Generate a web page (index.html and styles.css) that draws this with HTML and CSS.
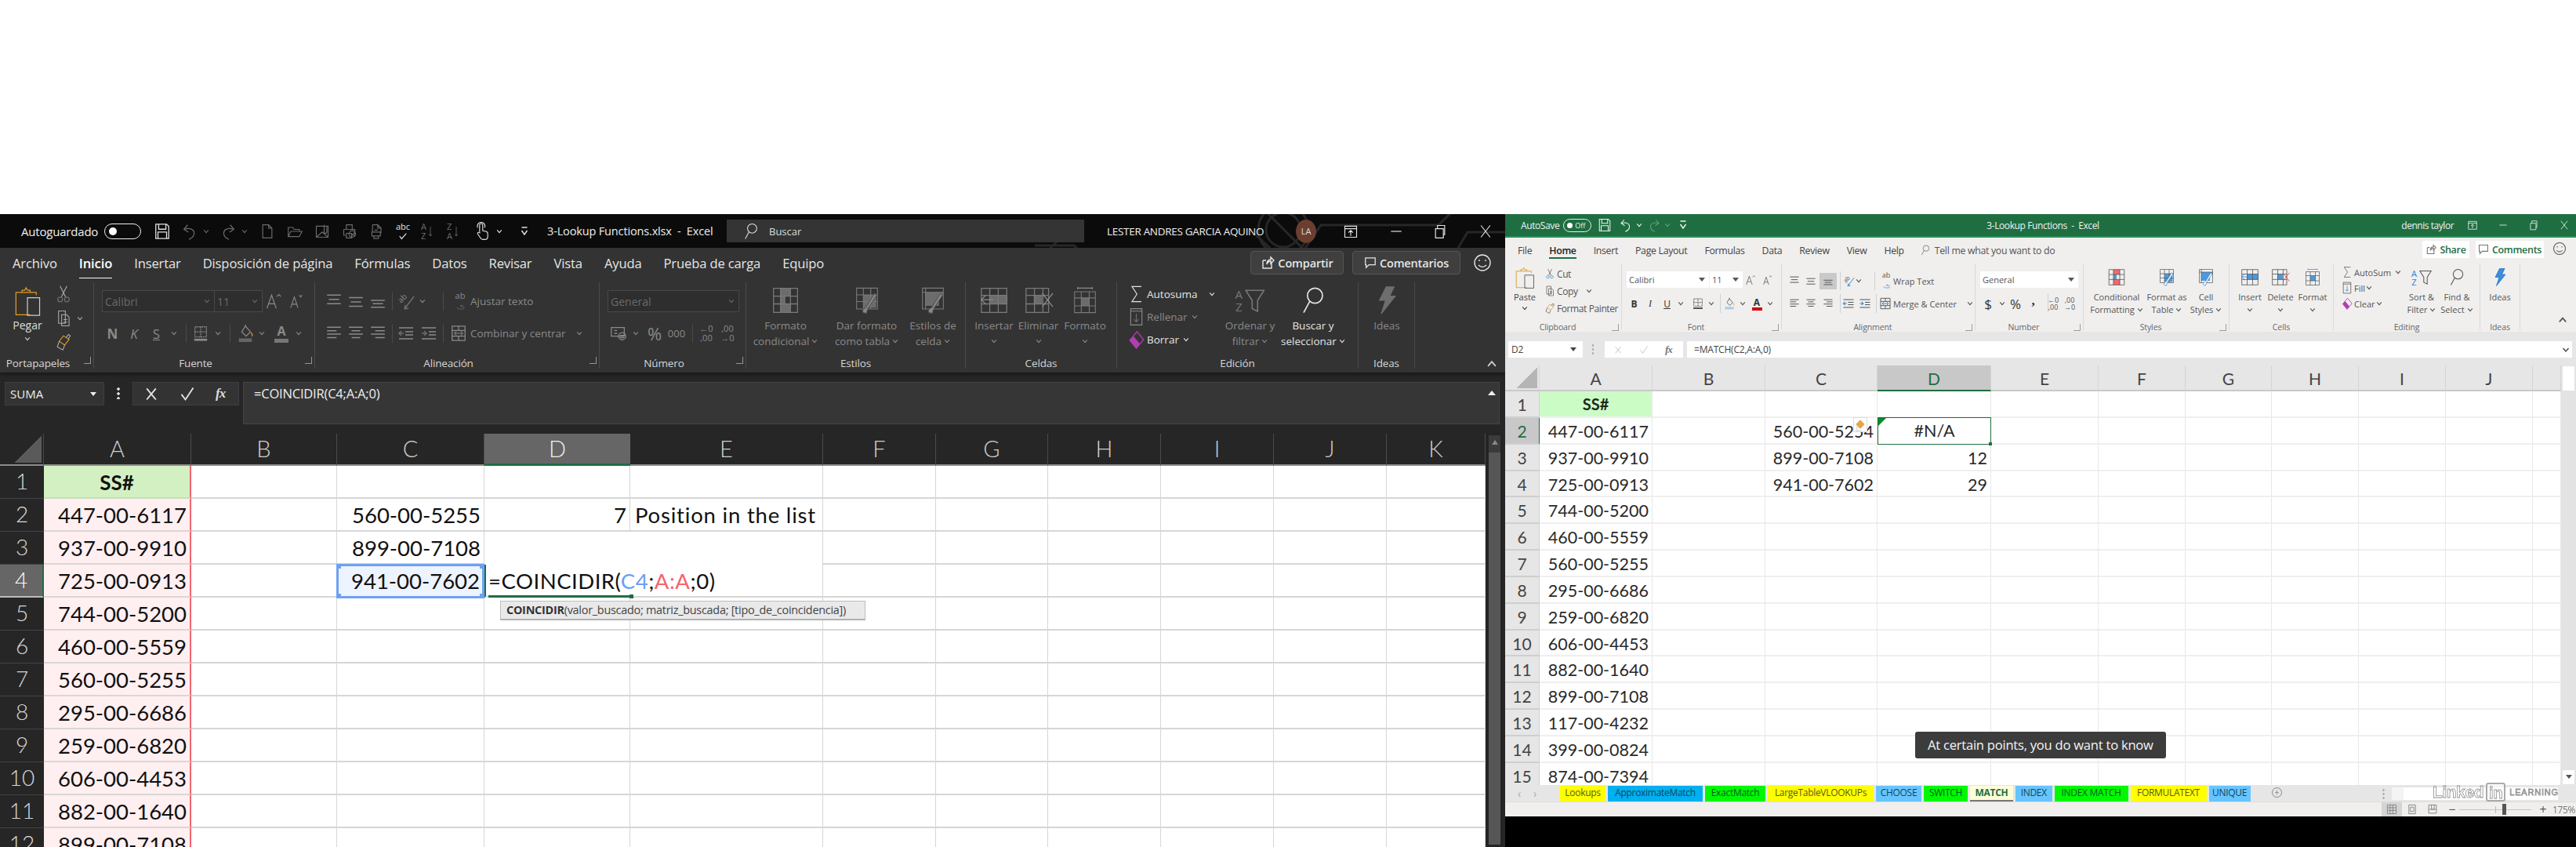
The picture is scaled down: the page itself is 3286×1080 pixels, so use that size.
FILE: index.html
```html
<!DOCTYPE html>
<html lang="es">
<head>
<meta charset="utf-8">
<title>Excel comparison</title>
<link rel="stylesheet" href="styles.css">
</head>
<body>
<svg class="defs" aria-hidden="true">
  <symbol id="save" viewBox="0 0 24 24"><path d="M3 2h15l3 3v17H3zM7 2v7h10V2M6 22v-9h12v9"/></symbol>
  <symbol id="undo" viewBox="0 0 24 24"><path d="M9 3 4 9l6 4M4 9c9-3 15 1 14 7-1 4-4 6-7 7"/></symbol>
  <symbol id="redo" viewBox="0 0 24 24"><path d="M15 3l5 6-6 4M20 9c-9-3-15 1-14 7 1 4 4 6 7 7"/></symbol>
  <symbol id="chev" viewBox="0 0 10 10"><path d="M1.5 3 5 7l3.5-4"/></symbol>
  <symbol id="new" viewBox="0 0 24 24"><path d="M5 2h9l5 5v15H5zM14 2v5h5"/></symbol>
  <symbol id="open" viewBox="0 0 24 24"><path d="M2 20V6h7l2 3h8v3M2 20l4-8h17l-4 8z"/></symbol>
  <symbol id="mail" viewBox="0 0 24 24"><path d="M3 4h18v17H3zM3 21 12 13l9 8M15 2v11a2 2 0 0 0 4 0V5"/></symbol>
  <symbol id="print" viewBox="0 0 24 24"><path d="M7 2h9v7H7zM3 9h17v9h-3M3 9v9h3M7 15h8v7H7z"/><circle cx="16" cy="16" r="5"/><path d="m14 16 2 2 3-4"/></symbol>
  <symbol id="printp" viewBox="0 0 24 24"><path d="M5 2h8l5 5v8M5 2v11M13 2v5h5M4 13h13v6H4zM7 19h7v4H7zM8 10h5"/></symbol>
  <symbol id="check" viewBox="0 0 14 10"><path d="m2 5 3 4 7-8"/></symbol>
  <symbol id="arrowd" viewBox="0 0 10 24"><path d="M5 2v20M2 18l3 4 3-4"/></symbol>
  <symbol id="touch" viewBox="0 0 24 30"><path d="M8 16V5a2.5 2.5 0 0 1 5 0v9l5 1c2 .6 3 2 3 4v4c0 3-2 5-5 5h-3c-2 0-3-1-4-3l-4-6c-1-2 1-3 3-2l1 1"/><path d="M5 9a6 6 0 1 1 11 0"/></symbol>
  <symbol id="qat" viewBox="0 0 10 14"><path d="M1.5 2h7M1.5 6 5 11l3.500-5"/></symbol>
  <symbol id="search" viewBox="0 0 24 30"><circle cx="14" cy="10" r="8"/><path d="M8.500 16 2 28"/></symbol>
  <symbol id="ribbon" viewBox="0 0 24 24"><path d="M3 4h18v17H3zM3 8h18M12 19v-8M8.500 14 12 10.500l3.500 3.500" /></symbol>
  <symbol id="min" viewBox="0 0 24 24"><path d="M4 12h16"/></symbol>
  <symbol id="restore" viewBox="0 0 24 24"><path d="M5 8h12v14H5zM8 8V3h11v14h-2"/></symbol>
  <symbol id="close" viewBox="0 0 24 24"><path d="m5 3 14 18M19 3 5 21"/></symbol>
  <symbol id="share" viewBox="0 0 18 18"><path d="M3 6h4M3 6v10h11V9M8 11c0-5 2-6 5-6V2l4 4-4 4V7c-2 0-4 1-5 4z"/></symbol>
  <symbol id="comment" viewBox="0 0 18 18"><path d="M2 2h14v10H7l-4 4v-4H2z"/></symbol>
  <symbol id="smile" viewBox="0 0 24 24"><circle cx="12" cy="12" r="10"/><path d="M8 8v2M16 8v2M7 15c3 3 7 3 10 0"/></symbol>
  <symbol id="clip" viewBox="0 0 40 44"><path class="org" d="M24 42H3V9h30v4"/><path class="org" d="M12 9V6h4l2-4 2 4h4v3"/><path d="M20 17h18v26H20z"/></symbol>
  <symbol id="cut" viewBox="0 0 20 28"><path d="M5 2 13 18M15 2 7 18"/><circle class="blu" cx="5" cy="22" r="3.500"/><circle class="blu" cx="15" cy="22" r="3.500"/></symbol>
  <symbol id="copy" viewBox="0 0 22 28"><path d="M3 2h11v20H3zM8 8h8l4 4v14H8zM11 16h6M11 20h6"/></symbol>
  <symbol id="paint" viewBox="0 0 24 28"><path class="org" d="m12 4 9 6-7 9-9-6z"/><path d="M16 7 20 2l3 2-3 5M5 13l-3 9 9 5 3-8"/></symbol>
  <symbol id="grow" viewBox="0 0 24 26"><path d="m2 24 7-20 7 20M5 17h8M17 6l3-3 3 3"/></symbol>
  <symbol id="shrink" viewBox="0 0 24 26"><path d="m4 24 6-18 6 18M6 18h8M18 3l2.500 3L23 3"/></symbol>
  <symbol id="bord" viewBox="0 0 24 24"><path class="dash" d="M4 3h16v14H4zM12 3v14M4 10h16"/><path class="thick" d="M3 21h18"/></symbol>
  <symbol id="fill" viewBox="0 0 24 26"><path d="m12 3 7 8-6 6-6-6zM12 3V1"/><path class="hl1" d="M3 20h18v5H3z"/><path class="org" d="M20 12c2 3 2 4 1 5"/></symbol>
  <symbol id="at" viewBox="0 0 20 20"><path d="M2 3h16M4 8h12M2 13h16"/></symbol>
  <symbol id="am" viewBox="0 0 20 20"><path d="M2 6h16M4 11h12M2 16h16"/></symbol>
  <symbol id="ab" viewBox="0 0 20 20"><path d="M2 9h16M4 13h12M2 17h16"/></symbol>
  <symbol id="lf" viewBox="0 0 20 20"><path d="M2 3h16M2 7h11M2 11h16M2 15h11"/></symbol>
  <symbol id="ce" viewBox="0 0 20 20"><path d="M2 3h16M5 7h10M2 11h16M5 15h10"/></symbol>
  <symbol id="rt" viewBox="0 0 20 20"><path d="M2 3h16M7 7h11M2 11h16M7 15h11"/></symbol>
  <symbol id="ind1" viewBox="0 0 22 20"><path d="M2 3h18M10 8h10M10 12h10M2 17h18"/><path class="blu" d="M8 10H2l3-3M2 10l3 3"/></symbol>
  <symbol id="ind2" viewBox="0 0 22 20"><path d="M2 3h18M11 8h9M11 12h9M2 17h18"/><path class="blu" d="M2 10h6l-3-3M8 10l-3 3"/></symbol>
  <symbol id="orient" viewBox="0 0 22 24"><path class="blu" d="M21 6 9 22M9 22l1-5M9 22l5-1"/></symbol>
  <symbol id="merge" viewBox="0 0 22 24"><path d="M2 2h18v20H2zM2 8h18M2 16h18M11 2v6M11 16v6"/><path class="blu" d="M5 12h12M8 9l-3 3 3 3M14 9l3 3-3 3"/></symbol>
  <symbol id="wrap" viewBox="0 0 22 26"><path class="blu" d="M4 20c0 3 2 4 6 4h8c3 0 3-7 0-7h-6l3-3M12 17l3 3"/></symbol>
  <symbol id="money" viewBox="0 0 24 24"><path d="M2 4h18v12H2z"/><circle cx="17" cy="16" r="5"/><path d="M6 8h4M6 12h4M14 15h6M14 18h6"/></symbol>
  <symbol id="tcond" viewBox="0 0 40 40"><path class="ht" d="M13 3h14v11H13zM13 25h14v12H13z"/><path class="hb" d="M13 14h7v11h-7z"/><path class="gr" d="M3 3h34v34H3zM3 14h34M3 25h34M13 3v34M27 3v34"/></symbol>
  <symbol id="ttab" viewBox="0 0 40 46"><path class="hb" d="M14 14h21v21H14z"/><path class="gr" d="M3 3h34v34H3zM3 14h34M3 25h34M14 3v34M26 3v34"/><path class="wh" d="M36 14 21 37l-2 7-5-1c-3-3 1-8 4-8L32 12z"/></symbol>
  <symbol id="tcel" viewBox="0 0 40 46"><path class="hb" d="M8 10h29v6H8zM8 16h22v16H8z"/><path class="gr" d="M3 3h34v34H3zM3 10h34M8 3v34"/><path class="wh" d="M36 14 21 37l-2 7-5-1c-3-3 1-8 4-8L32 12z"/></symbol>
  <symbol id="tins" viewBox="0 0 42 40"><path class="hb" d="M14 13h26v12H14z"/><path class="gr" d="M3 3h36v34H3zM3 13h36M3 25h36M15 3v34M27 3v34"/><path class="ar" d="M20 19H3M9 13l-6 6 6 6"/></symbol>
  <symbol id="tdel" viewBox="0 0 42 40"><path class="hb" d="M14 13h12v12H14z"/><path class="gr" d="M3 3h32v34H3zM3 13h32M3 25h32M15 3v34M27 3v34"/><path class="rx" d="m26 10 15 19M41 10 26 29"/></symbol>
  <symbol id="tfmt" viewBox="0 0 40 46"><path class="ar" d="M8 3h24M8 1v4M32 1v4"/><path class="hb" d="M14 19h13v13H14z"/><path class="gr" d="M3 9h34v34H3zM3 19h34M3 32h34M14 9v34M27 9v34"/></symbol>
  <symbol id="sigma" viewBox="0 0 20 30"><path d="M18 3H3l8 12-8 12h15"/></symbol>
  <symbol id="fildn" viewBox="0 0 22 30"><path d="M2 2h18v26H2zM2 6h18"/><path class="blu" d="M11 10v13M7 19l4 4 4-4"/></symbol>
  <symbol id="erase" viewBox="0 0 22 26"><path class="mag" d="M12 2 21 13 11 25 2 14z"/><path class="magf" d="M7 8 2 14l9 11 5-6z"/></symbol>
  <symbol id="funnel" viewBox="0 0 22 26"><path d="M1 2h20l-7 11v12l-6-3v-9z"/></symbol>
  <symbol id="bolt" viewBox="0 0 30 46"><path class="bolt" d="M14 1h13l-7 15h9L6 45l7-22H3z"/></symbol>
  <symbol id="cross" viewBox="0 0 20 24"><path d="m3 4 14 17M17 4 3 21"/></symbol>
  <symbol id="tick" viewBox="0 0 24 24"><path d="m3 13 6 8L21 3"/></symbol>
  <symbol id="normv" viewBox="0 0 20 20"><path d="M2 2h16v16H2zM2 7h16M2 12h16M7 2v16M12 2v16"/></symbol>
  <symbol id="pagev" viewBox="0 0 20 20"><path d="M4 2h12v16H4zM7 6h6v8H7z"/></symbol>
  <symbol id="breakv" viewBox="0 0 20 20"><path d="M3 2h14v15H3zM3 10h14M8 2v8h5V2"/></symbol>
</svg>

<div class="blank"></div>
<main class="desk">

<section class="dark">
  <header class="dt">
    <svg class="circuit" viewBox="0 0 640 43"><circle cx="317" cy="20" r="32"/><circle cx="317" cy="20" r="22"/><path d="m290 -8 54 54M345 43 365 14h150l22-22M540 43l12-20h60l28-28M0 40h50l16 16M20 43l30-30M300 43l-20-18"/></svg>
    <span class="dt-auto">Autoguardado</span>
    <span class="toggle"><b></b></span>
    <span class="qat">
      <svg class="ic s22 lit"><use href="#save"/></svg>
      <svg class="ic s22 off"><use href="#undo"/></svg>
      <svg class="ic s8 off chv"><use href="#chev"/></svg>
      <svg class="ic s22 off"><use href="#redo"/></svg>
      <svg class="ic s8 off chv"><use href="#chev"/></svg>
      <svg class="ic s20 off m2"><use href="#new"/></svg>
      <svg class="ic s20 off m2"><use href="#open"/></svg>
      <svg class="ic s20 off m2"><use href="#mail"/></svg>
      <svg class="ic s20 off m2"><use href="#print"/></svg>
      <svg class="ic s20 off m2"><use href="#printp"/></svg>
      <span class="abc">abc<svg class="ic s12"><use href="#check"/></svg></span>
      <span class="az off"><span>A<br>Z</span><svg class="ic az-a"><use href="#arrowd"/></svg></span>
      <span class="az off"><span>Z<br>A</span><svg class="ic az-a"><use href="#arrowd"/></svg></span>
      <svg class="ic s24 lit"><use href="#touch"/></svg>
      <svg class="ic s8 lit chv"><use href="#chev"/></svg>
      <svg class="ic s10 lit qatm"><use href="#qat"/></svg>
    </span>
    <span class="dt-file">3-Lookup Functions.xlsx&nbsp; -&nbsp; Excel</span>
    <span class="dt-search"><svg class="ic s22 lit"><use href="#search"/></svg><span>Buscar</span></span>
    <span class="dt-user">LESTER ANDRES GARCIA AQUINO</span>
    <span class="avatar">LA</span>
    <svg class="ic s20 lit wb1"><use href="#ribbon"/></svg>
    <svg class="ic s20 lit wb2"><use href="#min"/></svg>
    <svg class="ic s20 lit wb3"><use href="#restore"/></svg>
    <svg class="ic s20 lit wb4"><use href="#close"/></svg>
  </header>

  <nav class="d-tabs">
    <span>Archivo</span><span class="on">Inicio</span><span>Insertar</span><span>Disposición de página</span><span>Fórmulas</span><span>Datos</span><span>Revisar</span><span>Vista</span><span>Ayuda</span><span>Prueba de carga</span><span>Equipo</span>
    <span class="d-btn d-share"><svg class="ic s18"><use href="#share"/></svg>Compartir</span>
    <span class="d-btn d-comm"><svg class="ic s16"><use href="#comment"/></svg>Comentarios</span>
    <svg class="ic s24 d-smile"><use href="#smile"/></svg>
  </nav>

  <div class="d-rib">
    <section class="g dg1">
      <div class="gb clipg">
        <div class="pegar"><svg class="ic clipi"><use href="#clip"/></svg><span>Pegar</span><svg class="ic s8"><use href="#chev"/></svg></div>
        <div class="clipc">
          <svg class="ic s22"><use href="#cut"/></svg>
          <span class="cc2"><svg class="ic s22"><use href="#copy"/></svg><svg class="ic s8 cchv"><use href="#chev"/></svg></span>
          <svg class="ic s22"><use href="#paint"/></svg>
        </div>
      </div>
      <div class="gl gll">Portapapeles<i class="launch"></i></div>
    </section>

    <section class="g dg2">
      <div class="gb">
        <div class="r1">
          <span class="combo cf">Calibri<svg class="ic s8"><use href="#chev"/></svg></span>
          <span class="combo cs">11<svg class="ic s8"><use href="#chev"/></svg></span>
          <svg class="ic s22 fgrow"><use href="#grow"/></svg>
          <svg class="ic s20 fshr"><use href="#shrink"/></svg>
        </div>
        <div class="r2 d-font2">
          <b>N</b><i class="it">K</i><u class="it2">S</u><svg class="ic s8"><use href="#chev"/></svg><em class="vs"></em>
          <svg class="ic s22"><use href="#bord"/></svg><svg class="ic s8"><use href="#chev"/></svg><em class="vs"></em>
          <svg class="ic s24"><use href="#fill"/></svg><svg class="ic s8"><use href="#chev"/></svg>
          <span class="fcol d">A</span><svg class="ic s8"><use href="#chev"/></svg>
        </div>
      </div>
      <div class="gl gll">Fuente<i class="launch"></i></div>
    </section>

    <section class="g dg3">
      <div class="gb">
        <div class="r1 r1g d-al1">
          <svg class="ic s22"><use href="#at"/></svg><svg class="ic s22"><use href="#am"/></svg><svg class="ic s22"><use href="#ab"/></svg><em class="vs"></em>
          <span class="ori d"><span>ab</span><svg class="ic"><use href="#orient"/></svg></span><svg class="ic s8"><use href="#chev"/></svg><em class="vs"></em>
          <span class="abw d"><span>ab</span><svg class="ic s14"><use href="#wrap"/></svg></span><b class="spc"></b><span class="ltxt">Ajustar texto</span>
        </div>
        <div class="r2 d-al2">
          <svg class="ic s22"><use href="#lf"/></svg><svg class="ic s22"><use href="#ce"/></svg><svg class="ic s22"><use href="#rt"/></svg><em class="vs"></em>
          <svg class="ic s22"><use href="#ind1"/></svg><svg class="ic s22"><use href="#ind2"/></svg><em class="vs"></em>
          <svg class="ic s22"><use href="#merge"/></svg><span class="ltxt mrg">Combinar y centrar<svg class="ic s8"><use href="#chev"/></svg></span>
        </div>
      </div>
      <div class="gl gll">Alineación<i class="launch"></i></div>
    </section>

    <section class="g dg4">
      <div class="gb">
        <div class="r1"><span class="combo cn">General<svg class="ic s8"><use href="#chev"/></svg></span></div>
        <div class="r2 d-num2">
          <svg class="ic s22"><use href="#money"/></svg><svg class="ic s8"><use href="#chev"/></svg><span class="pct">%</span><span class="th">000</span><em class="vs"></em>
          <span class="dec"><span>←0<br>,00</span></span><span class="dec"><span>,00<br>→0</span></span>
        </div>
      </div>
      <div class="gl gll">Número<i class="launch"></i></div>
    </section>

    <section class="g dg5">
      <div class="gb bigs">
        <div class="big b100"><svg class="ic bigi"><use href="#tcond"/></svg><span>Formato</span><span>condicional<svg class="ic s8"><use href="#chev"/></svg></span></div>
        <div class="big b107"><svg class="ic bigi"><use href="#ttab"/></svg><span>Dar formato</span><span>como tabla<svg class="ic s8"><use href="#chev"/></svg></span></div>
        <div class="big b62"><svg class="ic bigi"><use href="#tcel"/></svg><span>Estilos de</span><span>celda<svg class="ic s8"><use href="#chev"/></svg></span></div>
      </div>
      <div class="gl">Estilos</div>
    </section>

    <section class="g dg6">
      <div class="gb bigs">
        <div class="big b72"><svg class="ic bigi"><use href="#tins"/></svg><span>Insertar</span><span><svg class="ic s8"><use href="#chev"/></svg></span></div>
        <div class="big b41"><svg class="ic bigi"><use href="#tdel"/></svg><span>Eliminar</span><span><svg class="ic s8"><use href="#chev"/></svg></span></div>
        <div class="big b78"><svg class="ic bigi"><use href="#tfmt"/></svg><span>Formato</span><span><svg class="ic s8"><use href="#chev"/></svg></span></div>
      </div>
      <div class="gl">Celdas</div>
    </section>

    <section class="g dg7">
      <div class="gb bigs">
        <div class="edit3">
          <div class="er lit"><svg class="ic s24 sg"><use href="#sigma"/></svg><span>Autosuma</span><svg class="ic s8 e-ch"><use href="#chev"/></svg></div>
          <div class="er"><svg class="ic s24 sg"><use href="#fildn"/></svg><span>Rellenar</span><svg class="ic s8 e-c2"><use href="#chev"/></svg></div>
          <div class="er lit"><svg class="ic s24 sg"><use href="#erase"/></svg><span>Borrar</span><svg class="ic s8 e-c2"><use href="#chev"/></svg></div>
        </div>
        <div class="big b69"><span class="srt d"><span>A<br>Z</span><svg class="ic"><use href="#funnel"/></svg></span><span>Ordenar y</span><span>filtrar<svg class="ic s8"><use href="#chev"/></svg></span></div>
        <div class="big b92 lit"><svg class="ic bigi"><use href="#search"/></svg><span>Buscar y</span><span>seleccionar<svg class="ic s8"><use href="#chev"/></svg></span></div>
      </div>
      <div class="gl">Edición</div>
    </section>

    <section class="g dg8">
      <div class="gb bigs"><div class="big b71"><svg class="ic bigi"><use href="#bolt"/></svg><span>Ideas</span></div></div>
      <div class="gl">Ideas</div>
    </section>
    <svg class="ic s14 collapse"><use href="#chev"/></svg>
  </div>

  <div class="d-fx">
    <span class="d-name">SUMA<i class="tri"></i></span>
    <span class="d-dots"></span>
    <span class="d-fxb">
      <svg class="ic s20 lit bold"><use href="#cross"/></svg>
      <svg class="ic s20 lit bold"><use href="#tick"/></svg>
      <span class="fx">fx</span>
    </span>
    <span class="d-input">=COINCIDIR(C4;A:A;0)<i class="tri-up"></i></span>
  </div>

  <div class="d-sheet">
    <div class="d-grid">
      <div class="hd corner"><i></i></div><div class="hd">A</div><div class="hd">B</div><div class="hd">C</div><div class="hd sel">D</div><div class="hd">E</div><div class="hd">F</div><div class="hd">G</div><div class="hd">H</div><div class="hd">I</div><div class="hd">J</div><div class="hd">K</div>

      <div class="rh">1</div><div class="a1">SS#</div><i></i><i></i><i></i><i></i><i></i><i></i><i></i><i></i><i></i><i></i>
      <div class="rh">2</div><div class="ca">447-00-6117</div><i></i><div class="n">560-00-5255</div><div class="n">7</div><div class="t">Position in the list</div><i></i><i></i><i></i><i></i><i></i><i></i>
      <div class="rh">3</div><div class="ca">937-00-9910</div><i></i><div class="n">899-00-7108</div><i class="nb"></i><i class="nbb"></i><i></i><i></i><i></i><i></i><i></i><i></i>
      <div class="rh rsel">4</div><div class="ca">725-00-0913</div><i></i><div class="n c4">941-00-7602<b class="h tl"></b><b class="h tr"></b><b class="h bl"></b><b class="h br"></b></div><div class="edit">=COINCIDIR(<span class="rb">C4</span>;<span class="rr">A:A</span>;0)</div><i></i><i></i><i></i><i></i><i></i><i></i>
      <div class="rh">5</div><div class="ca">744-00-5200</div><i></i><i></i><i></i><i></i><i></i><i></i><i></i><i></i><i></i><i></i>
      <div class="rh">6</div><div class="ca">460-00-5559</div><i></i><i></i><i></i><i></i><i></i><i></i><i></i><i></i><i></i><i></i>
      <div class="rh">7</div><div class="ca">560-00-5255</div><i></i><i></i><i></i><i></i><i></i><i></i><i></i><i></i><i></i><i></i>
      <div class="rh">8</div><div class="ca">295-00-6686</div><i></i><i></i><i></i><i></i><i></i><i></i><i></i><i></i><i></i><i></i>
      <div class="rh">9</div><div class="ca">259-00-6820</div><i></i><i></i><i></i><i></i><i></i><i></i><i></i><i></i><i></i><i></i>
      <div class="rh">10</div><div class="ca">606-00-4453</div><i></i><i></i><i></i><i></i><i></i><i></i><i></i><i></i><i></i><i></i>
      <div class="rh">11</div><div class="ca">882-00-1640</div><i></i><i></i><i></i><i></i><i></i><i></i><i></i><i></i><i></i><i></i>
      <div class="rh">12</div><div class="ca">899-00-7108</div><i></i><i></i><i></i><i></i><i></i><i></i><i></i><i></i><i></i><i></i>
      <div class="tip"><b>COINCIDIR</b>(valor_buscado; matriz_buscada; [tipo_de_coincidencia])</div>
    </div>
    <div class="d-vs"><i class="up"></i><i class="thumb"></i></div>
  </div>
</section>

<section class="light">
  <header class="lt">
    <span class="lt-auto">AutoSave</span>
    <span class="ltog"><b></b>Off</span>
    <svg class="ic s18 ls"><use href="#save"/></svg>
    <svg class="ic s18 lu"><use href="#undo"/></svg>
    <svg class="ic s8 lc"><use href="#chev"/></svg>
    <svg class="ic s18 lr fade"><use href="#redo"/></svg>
    <svg class="ic s8 lc fade"><use href="#chev"/></svg>
    <svg class="ic s10 lq"><use href="#qat"/></svg>
    <span class="lt-file">3-Lookup Functions&nbsp; -&nbsp; Excel</span>
    <span class="lt-user">dennis taylor</span>
    <svg class="ic s14 lw1"><use href="#ribbon"/></svg>
    <svg class="ic s14 lw2"><use href="#min"/></svg>
    <svg class="ic s14 lw3"><use href="#restore"/></svg>
    <svg class="ic s14 lw4"><use href="#close"/></svg>
  </header>

  <nav class="l-tabs">
    <span>File</span><span class="on">Home</span><span>Insert</span><span>Page Layout</span><span>Formulas</span><span>Data</span><span>Review</span><span>View</span><span>Help</span>
    <span class="tell"><svg class="ic s14"><use href="#search"/></svg>Tell me what you want to do</span>
    <span class="l-btn l-share"><svg class="ic s14"><use href="#share"/></svg>Share</span>
    <span class="l-btn l-comm"><svg class="ic s14"><use href="#comment"/></svg>Comments</span>
    <svg class="ic s18 l-smile"><use href="#smile"/></svg>
  </nav>

  <div class="l-rib">
    <section class="lg lg1">
      <div class="lb clipg">
        <div class="lpaste"><svg class="ic lclip"><use href="#clip"/></svg><span>Paste</span><svg class="ic s8"><use href="#chev"/></svg></div>
        <div class="lclipc">
          <span class="lcr"><svg class="ic s14"><use href="#cut"/></svg>Cut</span>
          <span class="lcr"><svg class="ic s14"><use href="#copy"/></svg>Copy<svg class="ic s8 lcopyc"><use href="#chev"/></svg></span>
          <span class="lcr"><svg class="ic s14"><use href="#paint"/></svg>Format Painter</span>
        </div>
      </div>
      <div class="ll lll">Clipboard<i class="launch"></i></div>
    </section>

    <section class="lg lg2">
      <div class="lb">
        <div class="l1">
          <span class="lcombo lcf">Calibri<i class="tri"></i></span>
          <span class="lcombo lcs">11<i class="tri"></i></span>
          <svg class="ic s14 lgrow"><use href="#grow"/></svg>
          <svg class="ic s14 lshr"><use href="#shrink"/></svg>
        </div>
        <div class="l2 l-font2">
          <b>B</b><i class="it">I</i><u>U</u><svg class="ic s8"><use href="#chev"/></svg>
          <svg class="ic s16"><use href="#bord"/></svg><svg class="ic s8"><use href="#chev"/></svg><em class="vs"></em>
          <svg class="ic s16"><use href="#fill"/></svg><svg class="ic s8"><use href="#chev"/></svg>
          <span class="fcol l">A</span><svg class="ic s8"><use href="#chev"/></svg>
        </div>
      </div>
      <div class="ll lll">Font<i class="launch"></i></div>
    </section>

    <section class="lg lg3">
      <div class="lb">
        <div class="l1 l1g l-al1">
          <svg class="ic s14"><use href="#at"/></svg><svg class="ic s14"><use href="#am"/></svg><span class="alsel"><svg class="ic s14"><use href="#ab"/></svg></span><em class="vs"></em>
          <span class="ori l"><span>ab</span><svg class="ic"><use href="#orient"/></svg></span><svg class="ic s8"><use href="#chev"/></svg><em class="vs"></em>
          <span class="abw l"><span>ab</span><svg class="ic s10"><use href="#wrap"/></svg></span><b class="spc"></b><span class="ltxt">Wrap Text</span>
        </div>
        <div class="l2 l-al2">
          <svg class="ic s14"><use href="#lf"/></svg><svg class="ic s14"><use href="#ce"/></svg><svg class="ic s14"><use href="#rt"/></svg><em class="vs"></em>
          <svg class="ic s16"><use href="#ind1"/></svg><svg class="ic s16"><use href="#ind2"/></svg><em class="vs"></em>
          <svg class="ic s16"><use href="#merge"/></svg><span class="ltxt mrg">Merge &amp; Center<svg class="ic s8"><use href="#chev"/></svg></span>
        </div>
      </div>
      <div class="ll lll">Alignment<i class="launch"></i></div>
    </section>

    <section class="lg lg4">
      <div class="lb">
        <div class="l1"><span class="lcombo lcn">General<i class="tri"></i></span></div>
        <div class="l2 l-num2">
          <span class="lsym">$</span><svg class="ic s8"><use href="#chev"/></svg><span class="lsym">%</span><span class="lsym bcomma">,</span><em class="vs"></em>
          <span class="ldec"><span>←0<br>,00</span></span><span class="ldec"><span>,00<br>→0</span></span>
        </div>
      </div>
      <div class="ll lll">Number<i class="launch"></i></div>
    </section>

    <section class="lg lg5">
      <div class="lb lbigs">
        <div class="lbig w84"><svg class="ic lbi"><use href="#tcond"/></svg><span>Conditional</span><span>Formatting<svg class="ic s8"><use href="#chev"/></svg></span></div>
        <div class="lbig w44"><svg class="ic lbi"><use href="#ttab"/></svg><span>Format as</span><span>Table<svg class="ic s8"><use href="#chev"/></svg></span></div>
        <div class="lbig w56"><svg class="ic lbi"><use href="#tcel"/></svg><span>Cell</span><span>Styles<svg class="ic s8"><use href="#chev"/></svg></span></div>
      </div>
      <div class="ll lll">Styles<i class="launch"></i></div>
    </section>

    <section class="lg lg6">
      <div class="lb lbigs">
        <div class="lbig w52"><svg class="ic lbi"><use href="#tins"/></svg><span>Insert</span><span><svg class="ic s8"><use href="#chev"/></svg></span></div>
        <div class="lbig w26"><svg class="ic lbi"><use href="#tdel"/></svg><span>Delete</span><span><svg class="ic s8"><use href="#chev"/></svg></span></div>
        <div class="lbig w56"><svg class="ic lbi"><use href="#tfmt"/></svg><span>Format</span><span><svg class="ic s8"><use href="#chev"/></svg></span></div>
      </div>
      <div class="ll">Cells</div>
    </section>

    <section class="lg lg7">
      <div class="lb lbigs">
        <div class="ledit">
          <div class="ler"><svg class="ic s16"><use href="#sigma"/></svg><span>AutoSum</span><svg class="ic s8 lech"><use href="#chev"/></svg></div>
          <div class="ler"><svg class="ic s16"><use href="#fildn"/></svg><span>Fill</span><svg class="ic s8"><use href="#chev"/></svg></div>
          <div class="ler"><svg class="ic s16"><use href="#erase"/></svg><span>Clear</span><svg class="ic s8"><use href="#chev"/></svg></div>
        </div>
        <div class="lbig w46"><span class="srt l"><span>A<br>Z</span><svg class="ic"><use href="#funnel"/></svg></span><span>Sort &amp;</span><span>Filter<svg class="ic s8"><use href="#chev"/></svg></span></div>
        <div class="lbig w44"><svg class="ic lbi"><use href="#search"/></svg><span>Find &amp;</span><span>Select<svg class="ic s8"><use href="#chev"/></svg></span></div>
      </div>
      <div class="ll">Editing</div>
    </section>

    <section class="lg lg8">
      <div class="lb lbigs"><div class="lbig w50"><svg class="ic lbi"><use href="#bolt"/></svg><span>Ideas</span></div></div>
      <div class="ll">Ideas</div>
    </section>
    <svg class="ic s12 lcollapse"><use href="#chev"/></svg>
  </div>

  <div class="l-fx">
    <span class="l-name">D2<i class="tri"></i></span>
    <span class="l-dots"></span>
    <span class="l-fxb">
      <svg class="ic s12"><use href="#cross"/></svg>
      <svg class="ic s12"><use href="#tick"/></svg>
      <span class="fx">fx</span>
    </span>
    <span class="l-input">=MATCH(C2,A:A,0)<svg class="ic s10"><use href="#chev"/></svg></span>
  </div>

  <div class="l-sheet">
    <div class="l-grid">
      <div class="hd corner"><i></i></div><div class="hd">A</div><div class="hd">B</div><div class="hd">C</div><div class="hd sel">D</div><div class="hd">E</div><div class="hd">F</div><div class="hd">G</div><div class="hd">H</div><div class="hd">I</div><div class="hd">J</div><div class="hd"></div>

      <div class="rh">1</div><div class="a1">SS#</div><i></i><i></i><i></i><i></i><i></i><i></i><i></i><i></i><i></i><i></i>
      <div class="rh rsel">2</div><div class="n">447-00-6117</div><i></i><div class="n c2">560-00-5254<b class="err"><b></b></b></div><div class="d2">#N/A</div><i></i><i></i><i></i><i></i><i></i><i></i><i></i>
      <div class="rh">3</div><div class="n">937-00-9910</div><i></i><div class="n">899-00-7108</div><div class="n">12</div><i></i><i></i><i></i><i></i><i></i><i></i><i></i>
      <div class="rh">4</div><div class="n">725-00-0913</div><i></i><div class="n">941-00-7602</div><div class="n">29</div><i></i><i></i><i></i><i></i><i></i><i></i><i></i>
      <div class="rh">5</div><div class="n">744-00-5200</div><i></i><i></i><i></i><i></i><i></i><i></i><i></i><i></i><i></i><i></i>
      <div class="rh">6</div><div class="n">460-00-5559</div><i></i><i></i><i></i><i></i><i></i><i></i><i></i><i></i><i></i><i></i>
      <div class="rh">7</div><div class="n">560-00-5255</div><i></i><i></i><i></i><i></i><i></i><i></i><i></i><i></i><i></i><i></i>
      <div class="rh">8</div><div class="n">295-00-6686</div><i></i><i></i><i></i><i></i><i></i><i></i><i></i><i></i><i></i><i></i>
      <div class="rh">9</div><div class="n">259-00-6820</div><i></i><i></i><i></i><i></i><i></i><i></i><i></i><i></i><i></i><i></i>
      <div class="rh">10</div><div class="n">606-00-4453</div><i></i><i></i><i></i><i></i><i></i><i></i><i></i><i></i><i></i><i></i>
      <div class="rh">11</div><div class="n">882-00-1640</div><i></i><i></i><i></i><i></i><i></i><i></i><i></i><i></i><i></i><i></i>
      <div class="rh">12</div><div class="n">899-00-7108</div><i></i><i></i><i></i><i></i><i></i><i></i><i></i><i></i><i></i><i></i>
      <div class="rh">13</div><div class="n">117-00-4232</div><i></i><i></i><i></i><i></i><i></i><i></i><i></i><i></i><i></i><i></i>
      <div class="rh">14</div><div class="n">399-00-0824</div><i></i><i></i><i></i><i></i><i></i><i></i><i></i><i></i><i></i><i></i>
      <div class="rh">15</div><div class="n">874-00-7394</div><i></i><i></i><i></i><i></i><i></i><i></i><i></i><i></i><i></i><i></i>
      <div class="toast">At certain points, you do want to know</div>
    </div>
    <div class="l-vs"><i class="btn"></i><i class="btn dn"></i></div>
  </div>

  <div class="l-sheets">
    <span class="nav">‹</span><span class="nav">›</span>
    <div class="stabs">
      <span class="y">Lookups</span><span class="b">ApproximateMatch</span><span class="g2">ExactMatch</span><span class="y">LargeTableVLOOKUPs</span><span class="lb2">CHOOSE</span><span class="g2">SWITCH</span><span class="act">MATCH</span><span class="lb2">INDEX</span><span class="g2">INDEX MATCH</span><span class="y">FORMULATEXT</span><span class="lb2">UNIQUE</span>
    </div>
    <span class="plus">+</span>
    <span class="h-dots"></span>
    <span class="hs"><i></i></span>
    <div class="mark"><span class="m-l">Linked</span><span class="m-in">in</span><span class="m-t">LEARNING</span></div>
  </div>

  <footer class="l-status">
    <span class="vbtn on"><svg class="ic s14"><use href="#normv"/></svg></span>
    <span class="vbtn"><svg class="ic s14"><use href="#pagev"/></svg></span>
    <span class="vbtn"><svg class="ic s14"><use href="#breakv"/></svg></span>
    <span class="zm">−</span>
    <span class="slider"><i></i><b></b></span>
    <span class="zm">+</span>
    <span class="pc">175%</span>
  </footer>
</section>
</main>
</body>
</html>
```
FILE: styles.css
```css
*{box-sizing:border-box}
html,body{margin:0;padding:0}
body{width:3286px;height:1080px;overflow:hidden;background:#000;font-family:"Open Sans","Noto Sans",sans-serif}
.defs{position:absolute;width:0;height:0}
.blank{height:273px;background:#fff}
.desk{display:flex;height:807px;background:#000}

/* icons */
.ic{fill:none;stroke:currentColor;stroke-width:1.4;flex:none;display:block;overflow:visible}
.s8{width:8px;height:8px}.s10{width:10px;height:14px}.s12{width:12px;height:12px}.s14{width:14px;height:14px}.s16{width:16px;height:16px}
.s18{width:18px;height:18px}.s20{width:20px;height:20px}.s22{width:22px;height:22px}.s24{width:24px;height:24px}
.org{stroke:var(--org)}.blu{stroke:var(--blu)}.hl1{fill:var(--fill1);stroke:none}
.ht{fill:var(--red);stroke:none}.hb{fill:var(--blue);stroke:none}.gr{stroke:var(--grid)}.wh{fill:var(--paper);stroke:var(--brush)}
.ar{stroke:var(--arrow)}.rx{stroke:var(--rx)}.mag{stroke:#b13fb1;fill:none}.magf{fill:#b13fb1;stroke:none}.bolt{fill:var(--bolt);stroke:var(--boltl)}
.dash{stroke-dasharray:2 1}.thick{stroke-width:3}
.vs{display:block;width:1px;height:24px;background:var(--sep)}
.launch{position:absolute;right:3px;top:4px;width:9px;height:9px;border:1px solid currentColor;border-top:0;border-left:0;opacity:.6}
.fcol{font-weight:700;text-align:center;width:18px;border-bottom:5px solid var(--fill2);display:block}
.fcol.d{font-size:16px;line-height:19px;color:#8a8a8a}
.fcol.l{font-size:12px;line-height:13px;width:13px;border-bottom-width:4px;color:#333}
.ori{position:relative;display:block}
.ori span{position:absolute;transform:rotate(-45deg);color:inherit}
.ori .ic{width:100%;height:100%}
.ori.d{width:22px;height:24px;font-size:10px;color:#8a8a8a}.ori.d span{left:0;top:1px}
.ori.l{width:15px;height:16px;font-size:7.500px;color:#555}.ori.l span{left:0;top:1px}
.abw{display:flex;flex-direction:column;align-items:center}
.abw span{line-height:.8}
.abw.d{font-size:11px;color:#8a8a8a}
.abw.l{font-size:9px;color:#555}
.srt{display:flex;align-items:center;gap:1px;text-align:center}
.srt .ic{width:100%;height:100%}
.big .srt{width:38px;height:36px;margin-bottom:4px;font-size:15px;line-height:16px;color:#777}
.big .srt span{display:block;height:auto}
.lbig .srt{width:26px;height:23px;margin-bottom:6px;font-size:11px;line-height:11px;color:#1e88d8}
.lbig .srt span{display:block;height:auto}
.srt .ic{min-width:0;flex:1;color:#777}
.lbig .srt .ic{color:#555}

/* ---------- dark window ---------- */
.dark{width:1920px;flex:none;background:#262626;color:#ddd;height:807px;overflow:hidden;
  --org:#e59b23;--blu:#6f6f6f;--fill1:#666;--fill2:#777;--red:#6c6c6c;--blue:#6c6c6c;--grid:#7a7a7a;--paper:#8a8a8a;--brush:#555;--arrow:#8a8a8a;--rx:#8a8a8a;--bolt:#6e6e6e;--boltl:#6e6e6e;--sep:#4a4a4a}
.lit{color:#e4e4e4}
.off{color:#6a6a6a}
.dt{position:relative;height:43px;background:#0b0b0b;display:flex;align-items:center;overflow:hidden}
.dt>*{position:relative}
.dt .circuit{position:absolute;left:1320px;top:0;width:640px;height:43px;fill:none;stroke:#272727;stroke-width:3}
.dt-auto{margin-left:27px;font-size:15px;color:#f0f0f0;letter-spacing:-.2px;width:97px;white-space:nowrap}
.toggle{margin-left:9px;width:47px;height:20px;border:1.500px solid #eee;border-radius:10px;display:flex;align-items:center;padding-left:5px;flex:none}
.toggle b{width:10px;height:10px;border-radius:50%;background:#fff}
.qat{margin-left:16px;display:flex;align-items:center;gap:13px;flex:none;width:488px}
.chv{margin-left:-7px}
.m2{margin-left:2px}
.abc{font-size:11px;line-height:12px;color:#e4e4e4;width:20px;display:flex;flex-direction:column;align-items:center}
.az{width:20px;display:flex;align-items:center;font-size:11px;line-height:12px;gap:2px}
.az-a{width:6px;height:24px}
.qatm{margin-left:10px}
.dt-file{margin-left:14px;font-size:14.500px;color:#eee;white-space:nowrap;width:229px;flex:none;letter-spacing:-.15px}
.dt-search{width:456px;height:29px;background:#343434;display:flex;align-items:center;padding-left:20px;gap:12px;font-size:13px;color:#ddd;flex:none}
.dt-user{margin-left:29px;font-size:13.500px;color:#f0f0f0;white-space:nowrap;width:232px;flex:none;letter-spacing:-.3px}
.avatar{margin-left:9px;width:26px;height:30px;border-radius:50%;background:#6b3f30;color:#ddd;font-size:11px;display:flex;align-items:center;justify-content:center;flex:none}
.wb1{margin-left:34px}.wb2{margin-left:38px}.wb3{margin-left:36px}.wb4{margin-left:38px}

.d-tabs{position:relative;height:39px;background:#333;display:flex;align-items:center;gap:28px;padding-left:16px;font-size:16.600px;color:#e6e6e6;white-space:nowrap;letter-spacing:-.15px}
.d-tabs .on{position:relative;color:#fff;font-weight:600}
.d-tabs .on::after{content:"";position:absolute;left:0;right:0;top:30px;height:4px;background:#fff}
.d-btn{position:absolute;top:4px;height:30px;background:#3f3f3f;border:1px solid #555;border-radius:4px;display:flex;align-items:center;justify-content:center;gap:4px;font-weight:600;font-size:14.500px}
.d-share{left:1595px;width:119px}
.d-comm{left:1725px;width:138px}
.d-smile{position:absolute;left:1879px;top:7px}

.d-rib{position:relative;height:120px;background:#333;display:flex;padding-top:5px;box-shadow:0 3px 4px rgba(0,0,0,.35);color:#6f6f6f;font-size:13.500px}
.g{display:flex;flex-direction:column;border-right:1px solid #4a4a4a;height:110px;flex:none;white-space:nowrap}
.gb{height:91px;flex:none;padding-left:10px;color:#8a8a8a}
.gl{position:relative;height:24px;flex:none;line-height:24px;text-align:center;color:#d6d6d6;font-size:13.500px;letter-spacing:-.15px}
.gll{padding-right:22px}
.dg1{width:120px}.dg2{width:282px}.dg3{width:363px}.dg4{width:187px}.dg5{width:280px}.dg6{width:193px}.dg7{width:308px}.dg8{width:72px}
.clipg{display:flex;padding-left:0}
.pegar{width:70px;display:flex;flex-direction:column;align-items:center;padding-top:5px;font-size:14px;color:#dcdcdc}
.pegar svg:last-child{margin-top:3px;color:#ccc}
.clipi{width:36px;height:38px;color:#ccc}
.pegar span{margin-top:2px;line-height:20px}
.clipc{display:flex;flex-direction:column;padding-top:3px;gap:8px;color:#aaa}
.cc2{display:flex;align-items:center;gap:6px}
.clipc>:first-child{height:24px}
.r1{display:flex;align-items:center;height:28px;margin-top:10px}
.r2{display:grid;align-items:center;justify-items:center;height:28px;margin-top:13px}
.r1g{display:grid;justify-items:center}
.r2 b,.r2 i,.r2 u{font:700 17px "Open Sans",sans-serif;color:#8a8a8a;font-style:normal}
.r2 .it{font-style:italic;font-weight:400}.r2 .it2{font-weight:400}
.combo{height:28px;background:#2e2e2e;border:1px solid #484848;display:flex;align-items:center;justify-content:space-between;padding:0 5px 0 3px;color:#6a6a6a;font-size:14px;flex:none}
.cf{width:144px}.cs{width:62px;margin-left:-1px}.cn{width:168px}
.fgrow{margin-left:3px}.fshr{margin-left:7px}
.d-font2{grid-template-columns:27px 28px 29px 16px 15px 22px 22px 8px 31px 12px 38px 6px}
.d-al1{grid-template-columns:28px 28px 28px 8px 28px 14px 38px 6px 10px auto}
.d-al2{grid-template-columns:28px 28px 28px 8px 28px 30px 6px 34px auto}
.spc{display:block}
.ltxt{justify-self:start;white-space:nowrap}
.mrg{margin-left:-2px;display:flex;align-items:center;gap:13px}
.d-num2{grid-template-columns:28px 16px 32px 24px 16px 20px 34px}
.pct{font-size:22px;line-height:1;color:#8a8a8a}
.th{font-size:13px;color:#8a8a8a}
.dec{font-size:11px;line-height:12px;color:#8a8a8a;text-align:center;white-space:nowrap}
.bigs{display:flex;padding-left:0;padding-top:5px}
.big{display:flex;flex-direction:column;align-items:center;line-height:20px;flex:none}
.big>span{display:flex;align-items:center;gap:3px;height:20px}
.big>.srt{height:36px}
.bigi{width:38px;height:36px;margin-bottom:4px}
.b100{width:100px}.b107{width:107px}.b62{width:62px}.b72{width:72px}.b41{width:41px}.b78{width:78px}.b69{width:69px}.b92{width:92px}.b71{width:72px}
.edit3{width:135px;margin-top:-5px;flex:none}
.er{display:flex;align-items:center;height:29px;padding-left:12px;gap:1px}
.sg{width:25px;height:24px}
.e-ch{margin-left:14px}.e-c2{margin-left:4px}
.collapse{position:absolute;left:1896px;top:102px;color:#ccc;transform:rotate(180deg)}

.d-fx{height:78px;display:flex;padding:12px 7px 0 6px;align-items:flex-start}
.d-name{width:127px;height:30px;background:#333;border:1px solid #3e3e3e;display:flex;align-items:center;justify-content:space-between;padding:0 9px 0 6px;font-size:15px;color:#eee;flex:none}
.tri{display:block;width:0;height:0;border:4px solid transparent;border-top:5px solid currentColor;border-bottom:0}
.tri-up{position:absolute;right:4px;top:10px;width:0;height:0;border:5px solid transparent;border-bottom:6px solid #eee;border-top:0}
.d-dots{width:4px;height:16px;margin:6px 16px 0 16px;flex:none;background:radial-gradient(circle,#ddd 1.500px,transparent 2px) 0 0/4px 6px}
.d-fxb{width:136px;height:30px;background:#333;border:1px solid #3e3e3e;display:flex;align-items:center;padding-left:13px;gap:26px;flex:none}
.bold{stroke-width:2.2}
.fx{font:italic 700 17px "Liberation Serif",serif;color:#ddd;letter-spacing:-1px}
.d-input{position:relative;margin-left:5px;flex:1;height:54px;background:#363636;border:1px solid #444;padding:4px 13px;font-size:16.500px;color:#eee;line-height:20px;letter-spacing:-.2px}

.d-sheet{display:flex;height:527px}
.d-grid,.l-grid{position:relative;display:grid;overflow:hidden;background:#fff;font-family:Lato,"Open Sans",sans-serif;color:#111}
.d-grid{width:1895px;height:527px;grid-template-columns:56px 188px 186px 188px 186px 246px 144px 143px 144px 144px 144px 126px;grid-template-rows:41px;grid-auto-rows:42px;font-size:27.500px}
.d-grid>*{border-right:1px solid #d6d6d6;border-bottom:2px solid #d6d6d6;display:block;min-width:0;white-space:nowrap}
.d-grid .hd{background:#262626;color:#d0d0d0;font-weight:300;font-size:29px;line-height:38px;text-align:center;border-right:1px solid #4a4a4a;border-bottom:2px solid #8c8c8c}
.d-grid .hd.sel{background:#666;color:#eee;border-bottom:3px solid #1f6d44;border-right:0}
.d-grid .rh{background:#262626;color:#d8d8d8;font-weight:300;font-size:28px;text-align:center;line-height:39px;border-right:0;border-bottom:1px solid #444}
.d-grid .rh.rsel{background:#666;color:#fff;border-right:2px solid #1f6d44;border-bottom:2px solid #bbb}
.corner{position:relative}
.corner i{position:absolute;left:19px;bottom:2px;width:34px;height:34px;background:linear-gradient(135deg,transparent 50%,#5a5a5a 50%)}
.d-grid .a1{background:#d3f0c2;text-align:center;font-weight:700;line-height:42px;font-size:26px;border-right:2px solid #f0666e;border-bottom:2px solid #c8dcbc}
.d-grid .ca{background:#ffeff0;text-align:right;padding-right:4px;line-height:42px;border-right:2px solid #f0666e;border-bottom:2px solid #dcd6d6}
.d-grid .n{text-align:right;padding-right:4px;line-height:42px}
.d-grid .t{padding-left:6px;line-height:42px;letter-spacing:.8px}
.d-grid .nb{border-right:0;border-bottom:0}
.d-grid .nbb{border-bottom:0}
.d-grid .c4{position:relative;background:#edf3ff;border:3px solid #6ea0f2;line-height:38px;padding-right:3px;margin:-1px 0 -1px -1px;z-index:2;overflow:visible}
.h{position:absolute;width:6px;height:6px;background:#6ea0f2}
.tl{left:-3px;top:-3px}.tr{right:-3px;top:-3px}.bl{left:-3px;bottom:-3px}.br{right:-3px;bottom:-3px}
.d-grid .edit{grid-column:span 2;position:relative;padding-left:3px;line-height:42px;border-left:2px solid #1f6d44;overflow:visible;letter-spacing:.5px}
.edit::after{content:"";position:absolute;left:3px;width:181px;bottom:-2px;height:3px;background:#1f6d44}
.edit::before{content:"";position:absolute;left:183px;bottom:-3px;width:5px;height:5px;background:#1f6d44}
.rb{color:#6b9ff5}.rr{color:#f5646e}
.d-grid .tip{position:absolute;left:638px;top:213px;width:466px;height:25px;background:#e9e9e9;border:1px solid #bdbdbd;border-bottom:2px solid #b0b0b0;font:14.400px/22px "Open Sans",sans-serif;color:#444;padding-left:7px;letter-spacing:-.25px;z-index:3}
.tip b{color:#333}
.d-vs{position:relative;width:22px;flex:none;background:#242424;padding:0 3px 0 4px}
.d-vs .up{display:block;height:22px;margin-top:2px;background:#3b3b3b;position:relative}
.d-vs .up::after{content:"";position:absolute;left:4px;top:6px;border:4px solid transparent;border-bottom:6px solid #888;border-top:0}
.d-vs .thumb{display:block;height:500px;background:#565656}

/* ---------- light window ---------- */
.light{width:1366px;height:768px;flex:none;background:#f0efee;color:#3d3d3d;display:flex;flex-direction:column;filter:blur(.45px);
  --org:#d99a2b;--blu:#2f86d1;--fill1:#a9cdea;--fill2:#d40000;--red:#f26b6b;--blue:#4c9be0;--grid:#555;--paper:#fff;--brush:#3a7fc0;--arrow:#2f86d1;--rx:#e0403a;--bolt:#3b8de0;--boltl:#1a6cb8;--sep:#d0d0d0}
.lt{height:30px;background:#1e6e42;color:#f1f1f1;display:flex;align-items:center;font-size:12px;border-bottom:2px solid #2a8f5a;flex:none;position:relative}
.lt-auto{margin-left:20px;letter-spacing:-.4px}
.ltog{margin-left:5px;width:36px;height:17px;border:1.500px solid #eee;border-radius:9px;font-size:9px;display:flex;align-items:center;padding-left:4px;gap:3px;flex:none}
.ltog b{width:7px;height:7px;border-radius:50%;background:#fff}
.ls{margin-left:8px}.lu{margin-left:9px}.lc{margin-left:4px}.lr{margin-left:6px}.fade{opacity:.35}.lq{margin-left:11px}
.lt-file{margin-left:382px;letter-spacing:-.4px;white-space:nowrap;width:143px}
.lt-user{margin-left:386px;white-space:nowrap;letter-spacing:-.45px;width:64px}
.lw1{margin-left:20px}.lw2{margin-left:25px}.lw3{margin-left:25px}.lw4{margin-left:25px}

.l-tabs{position:relative;height:32px;display:flex;align-items:center;font-size:12.300px;letter-spacing:-.3px;color:#444;flex:none;white-space:nowrap;gap:22px;padding-left:16px}
.l-tabs .on{position:relative;font-weight:600;color:#222}
.l-tabs .on::after{content:"";position:absolute;left:0;right:0;top:17px;height:2px;background:#1e6e42}
.tell{display:flex;gap:5px;align-items:center;margin-left:-2px;color:#555}
.l-btn{position:absolute;top:4px;height:22px;background:#fff;display:flex;align-items:center;justify-content:center;gap:4px;font-weight:600;color:#1e6e42;font-size:12.500px}
.l-btn .ic{color:#777}
.l-share{left:1170px;width:60px}.l-comm{left:1238px;width:87px}
.l-smile{position:absolute;left:1336px;top:5px;color:#555}

.l-rib{position:relative;height:88px;display:flex;flex:none;padding-top:1px;font-size:11px;color:#555}
.lg{display:flex;flex-direction:column;border-right:1px solid #dadada;height:85px;flex:none;white-space:nowrap}
.lb{height:71px;flex:none}
.ll{position:relative;height:16px;flex:none;line-height:16px;text-align:center;color:#666;font-size:10.500px;letter-spacing:-.1px;margin-top:2px}
.lll{padding-right:14px}
.lg1{width:149px}.lg2{width:204px}.lg3{width:247px}.lg4{width:138px}.lg5{width:186px}.lg6{width:133px}.lg7{width:187px}.lg8{width:51px}
.lpaste{width:50px;display:flex;flex-direction:column;align-items:center;padding-top:4px;color:#444;flex:none}
.lpaste span{line-height:14px;margin-top:4px}
.lpaste svg:last-child{margin-top:3px}
.lclip{width:28px;height:28px;color:#555}
.lclipc{display:flex;flex-direction:column;padding-top:2px;padding-left:0}
.lcr{display:flex;align-items:center;gap:2px;height:22px;font-size:12px;letter-spacing:-.4px}
.lcopyc{margin-left:8px}
.lg2 .lb,.lg3 .lb,.lg4 .lb{padding-left:6px}
.l1{display:flex;align-items:center;height:21px;margin-top:10px}
.l2{display:grid;align-items:center;justify-items:center;height:20px;margin-top:8px}
.l1g{display:grid;justify-items:center}
.l2 b,.l2 i,.l2 u{font:700 12px "Open Sans",sans-serif;font-style:normal;color:#333}
.l2 .it{font:italic 400 12px "Liberation Serif",serif}.l2 u{font-weight:400}
.lcombo{background:#fff;height:21px;display:flex;align-items:center;justify-content:space-between;padding:0 5px 0 3px;color:#555;font-size:11px;flex:none}
.lcf{width:105px}.lcs{width:42px;margin-left:1px}.lcn{width:125px}
.lgrow{margin-left:3px}.lshr{margin-left:7px}
.l-font2{grid-template-columns:19px 22px 21px 14px 30px 4px 18px 6px 28px 8px 26px}
.l-al1{grid-template-columns:20px 22px 22px 8px 14px 12px 28px 2px 8px auto}
.l-al2{grid-template-columns:20px 22px 22px 8px 14px 28px 0 24px auto}
.alsel{width:22px;height:21px;background:#c9c9c9;display:flex;align-items:center;justify-content:center}
.l-num2{grid-template-columns:20px 16px 18px 27px 10px 4px 38px}
.lsym{font-size:17px;line-height:1;color:#333}
.bcomma{font-weight:800;font-family:"Liberation Serif",serif;margin-top:-8px}
.ldec{font-size:9px;line-height:9px;color:#555;text-align:center;white-space:nowrap}
.lbigs{display:flex;padding-top:6px}
.lbig{display:flex;flex-direction:column;align-items:center;flex:none;line-height:16px}
.lbig>span{display:flex;align-items:center;gap:3px;height:16px}
.lbig>.srt{height:23px}
.lbi{width:26px;height:23px;margin-bottom:6px;color:#555}
.w84{width:84px}.w44{width:44px}.w56{width:56px}.w52{width:52px}.w26{width:26px}.w46{width:46px}.w50{width:50px}
.ledit{width:89px;flex:none;margin-top:-5px}
.ler{display:flex;align-items:center;height:20px;padding-left:9px;gap:1px;font-size:11px}
.lech{margin-left:4px}
.lcollapse{position:absolute;left:1343px;top:67px;transform:rotate(180deg)}

.l-fx{height:43px;background:#e6e6e6;display:flex;align-items:flex-start;padding:12px 5px 0 4px;flex:none;font-size:12px;letter-spacing:-.2px;color:#444}
.l-name{width:95px;height:21px;background:#fff;display:flex;align-items:center;justify-content:space-between;padding:0 8px 0 4px;flex:none}
.l-dots{width:4px;height:14px;margin:3px 13px 0 11px;flex:none;background:radial-gradient(circle,#aaa 1px,transparent 1.500px) 0 0/4px 5px}
.l-fxb{width:100px;height:21px;background:#fff;display:flex;align-items:center;padding-left:11px;gap:21px;color:#b0b0b0;flex:none}
.l-fxb .fx{font-size:13px;color:#777}
.l-input{margin-left:5px;flex:1;height:21px;background:#fff;display:flex;align-items:center;justify-content:space-between;padding:0 3px 0 9px}

.l-sheet{display:flex;height:535px;flex:none}
.l-grid{width:1347px;height:535px;grid-template-columns:44px 144px 144px 143px 145px 137px 111px 110px 111px 111px 111px 36px;grid-template-rows:33px;grid-auto-rows:33.850px;font-size:21.500px;color:#2a2a2a}
.l-grid>*{border-right:1px solid #e8e8e8;border-bottom:2px solid #efefef;min-width:0;white-space:nowrap;display:block}
.l-grid .hd{background:#e6e6e6;color:#444;font-size:21px;text-align:center;line-height:33px;border-right:1px solid #d4d4d4;border-bottom:2px solid #c9c9c9}
.l-grid .hd.sel{background:#c8c8c8;color:#1e6e42;border-bottom:2px solid #1e6e42}
.l-grid .corner i{left:15px;bottom:2px;width:26px;height:26px;background:linear-gradient(135deg,transparent 50%,#b5b5b5 50%)}
.l-grid .rh{background:#e6e6e6;text-align:center;color:#444;font-size:21px;line-height:33px;border-right:1px solid #d0d0d0;border-bottom:2px solid #cfcfcf}
.l-grid .rh.rsel{background:#c8c8c8;color:#1e6e42;border-right:1px solid #1e6e42}
.l-grid .a1{background:#ccfcc6;text-align:center;font-weight:700;font-size:20px;line-height:32px;color:#1c2a1c}
.l-grid .n{text-align:right;padding-right:4px;line-height:34px}
.l-grid .c2{position:relative;overflow:visible}
.err{position:absolute;right:12px;top:-1px;width:18px;height:19px;background:rgba(255,255,255,.85);border:1px solid #ddd;display:flex;align-items:center;justify-content:center}
.err b{width:8px;height:8px;background:#e3a44a;transform:rotate(45deg);display:block}
.l-grid .d2{position:relative;border:1px solid #1e6e42;text-align:center;line-height:33px;margin-top:-1px}
.d2::before{content:"";position:absolute;left:0;top:0;border:5px solid transparent;border-top:5px solid #0a8a2a;border-left:5px solid #0a8a2a}
.d2::after{content:"";position:absolute;right:-2px;bottom:-2px;width:4px;height:4px;background:#1e6e42}
.l-grid .toast{position:absolute;left:523px;top:467px;width:320px;height:34px;border:0;background:#3c3c3c;border-radius:3px;color:#f4f4f4;font:16.600px/33px "Open Sans",sans-serif;padding-left:16px;letter-spacing:-.25px;z-index:3}
.l-vs{width:19px;flex:none;background:#e3e3e3;display:flex;flex-direction:column;justify-content:space-between;padding:1px 2px}
.l-vs .btn{display:block;height:31px;background:#fff;position:relative}
.l-vs .btn.dn{height:18px}
.btn.dn::after{content:"";position:absolute;left:4px;top:6px;border:4px solid transparent;border-top:5px solid #555;border-bottom:0}

.l-sheets{position:relative;height:22px;background:#e6e6e6;display:flex;align-items:center;flex:none;font-size:12px;border-bottom:1px solid #ddd}
.nav{position:absolute;top:1px;color:#aaa;font-size:14px}
.nav:first-child{left:16px}.nav:nth-child(2){left:36px}
.stabs{position:absolute;left:70px;top:1px;height:18px;display:grid;grid-template-columns:61px 124px 80px 138px 61px 59px 58px 49.500px 97px 100px 56px;letter-spacing:-.3px}
.stabs span{margin-right:3px;text-align:center;line-height:18px;color:#14445a;white-space:nowrap;overflow:hidden}
.stabs .y{background:#ff0;color:#5a5a1a}.stabs .b{background:#00b0f0}.stabs .g2{background:#00f800;color:#0b5a2a}.stabs .lb2{background:#66c4ff}
.stabs .act{background:#fdfdd8;color:#1e6e42;font-weight:700;height:20px;border-bottom:2px solid #777}
.plus{position:absolute;left:978px;top:3px;width:13px;height:13px;border:1px solid #888;border-radius:50%;font-size:11px;line-height:10px;text-align:center;color:#777}
.h-dots{position:absolute;left:1119px;top:4px;width:3px;height:14px;background:radial-gradient(circle,#aaa 1px,transparent 1.500px) 0 0/3px 5px}
.hs{position:absolute;left:1131px;top:3px;width:212px;height:16px;background:#fff;border-left:15px solid #f4f4f4}
.mark{position:absolute;left:1183px;top:-4px;display:flex;align-items:center;gap:3px;height:26px;font-family:"Liberation Sans",sans-serif;color:rgba(255,255,255,.9);font-weight:700;-webkit-text-stroke:.8px #8f8f8f}
.m-l{font-size:21px;letter-spacing:-.4px}
.m-in{font-size:20px;width:25px;height:24px;border:2px solid #aaa;border-radius:3px;text-align:center;line-height:22px;background:rgba(255,255,255,.55)}
.m-t{font-size:11px;font-weight:400;letter-spacing:.8px;margin-left:2px}

.l-status{height:18px;background:#f0efee;display:flex;align-items:center;justify-content:flex-end;padding-right:5px;font-size:12px;color:#777;flex:none}
.vbtn{width:26px;height:18px;display:flex;align-items:center;justify-content:center;color:#888}
.vbtn.on{background:#d4d4d4}
.zm{width:12px;text-align:center;font-size:16px;line-height:16px;color:#555;margin-left:6px}
.slider{position:relative;width:92px;height:1px;background:#c8c4c4;margin:0 3px}
.slider i{position:absolute;left:46px;top:-4px;width:1px;height:9px;background:#bbb}
.slider b{position:absolute;left:55px;top:-7px;width:5px;height:14px;background:#555}
.pc{margin-left:6px;width:25px;letter-spacing:-.4px}
```
